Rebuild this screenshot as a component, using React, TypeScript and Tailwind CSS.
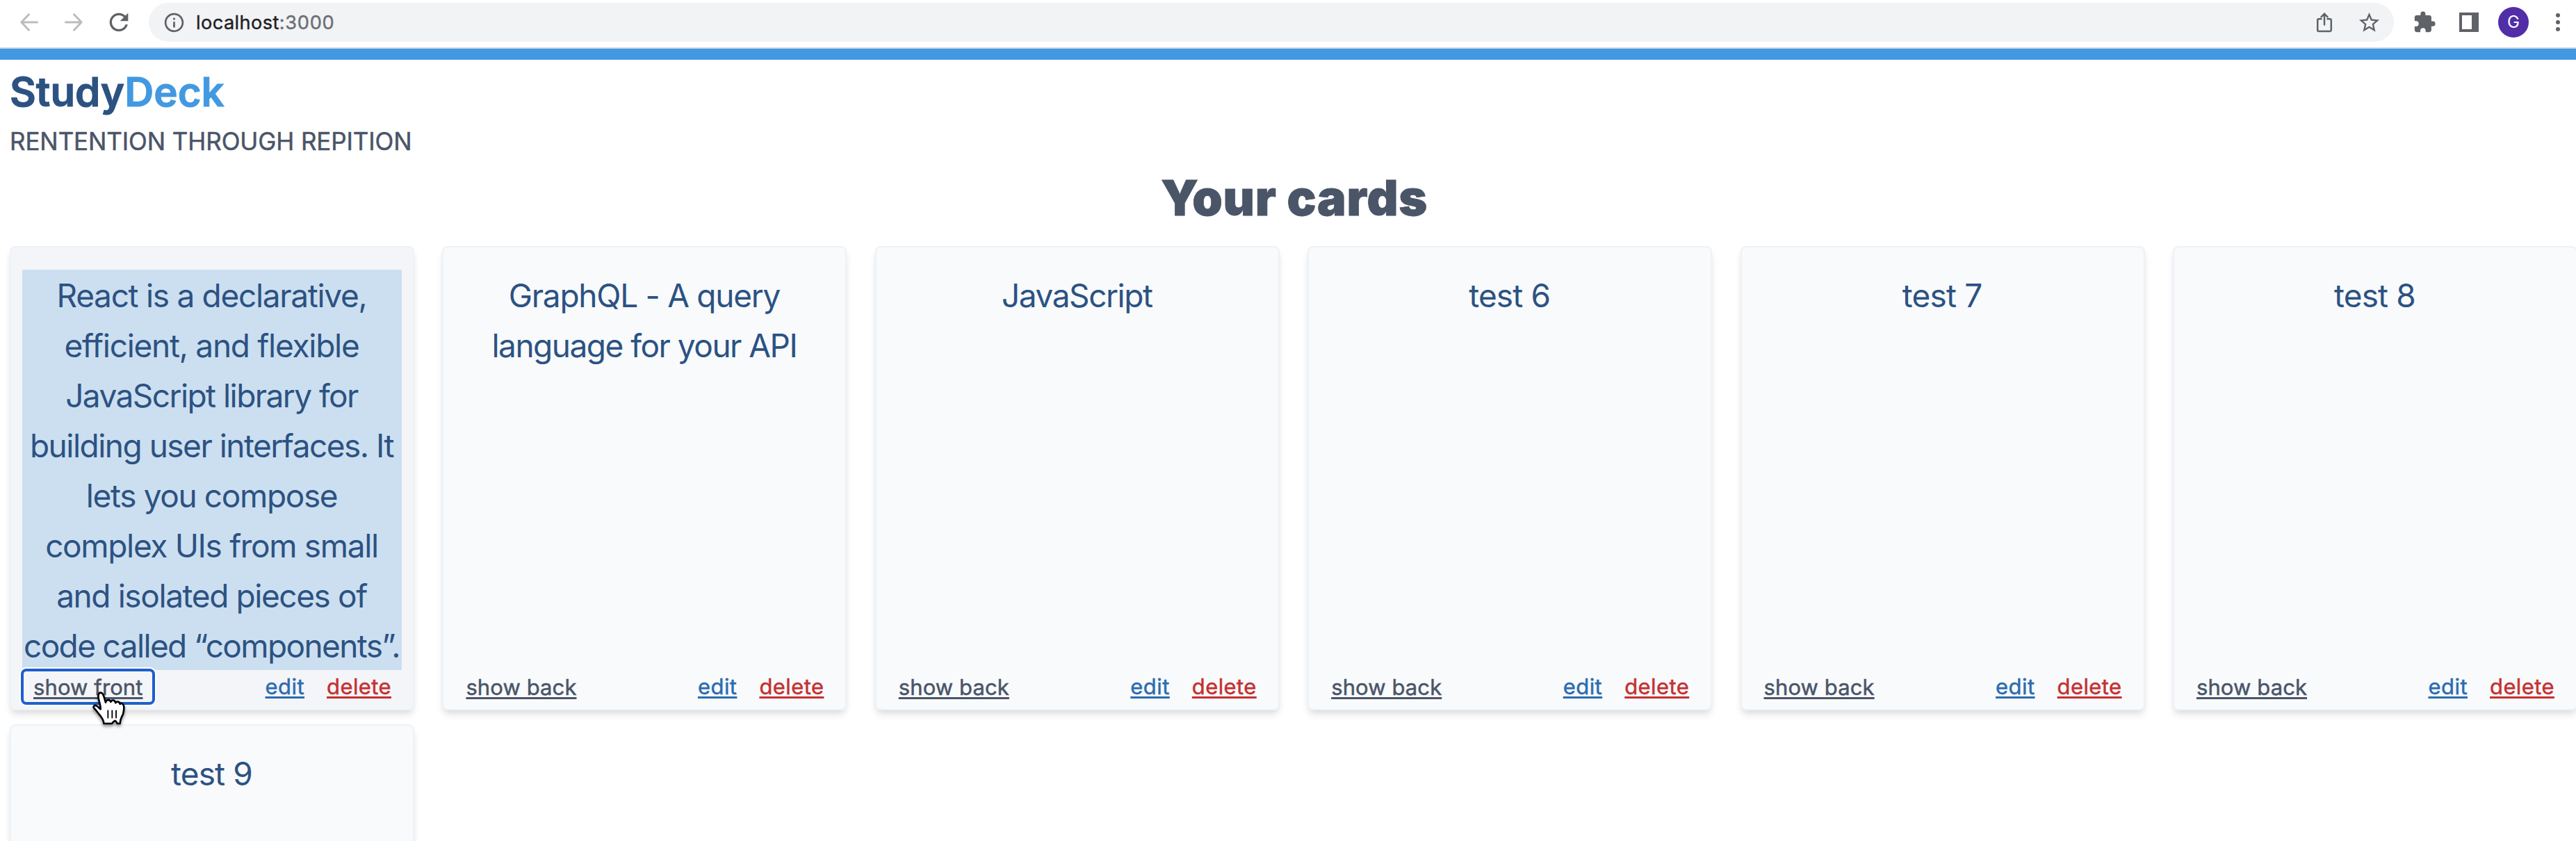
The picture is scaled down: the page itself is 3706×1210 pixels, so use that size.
import { MdExtension, MdInfoOutline, MdRefresh, MdStarBorder } from "react-icons/md";

type Line = { text: string; tracking: string };
type Card = { id: string; lines: Line[]; flipped?: boolean; collapsed?: boolean };

const cards: Card[] = [
  {
    id: "react",
    flipped: true,
    lines: [
      { text: "React is a declarative,", tracking: "tracking-[-1.31px]" },
      { text: "efficient, and flexible", tracking: "tracking-[-1.28px]" },
      { text: "JavaScript library for", tracking: "tracking-[-1.56px]" },
      { text: "building user interfaces. It", tracking: "tracking-[-1.51px]" },
      { text: "lets you compose", tracking: "tracking-[-1.37px]" },
      { text: "complex UIs from small", tracking: "tracking-[-1.34px]" },
      { text: "and isolated pieces of", tracking: "tracking-[-1.41px]" },
      { text: "code called “components”.", tracking: "tracking-[-1.64px]" },
    ],
  },
  {
    id: "graphql",
    lines: [
      { text: "GraphQL - A query", tracking: "tracking-[-1.26px]" },
      { text: "language for your API", tracking: "tracking-[-1.5px]" },
    ],
  },
  { id: "javascript", lines: [{ text: "JavaScript", tracking: "tracking-[-1.43px]" }] },
  { id: "test6", lines: [{ text: "test 6", tracking: "tracking-[-0.88px]" }] },
  { id: "test7", lines: [{ text: "test 7", tracking: "tracking-[-0.88px]" }] },
  { id: "test8", lines: [{ text: "test 8", tracking: "tracking-[-0.88px]" }] },
  { id: "test9", collapsed: true, lines: [{ text: "test 9", tracking: "tracking-[-0.88px]" }] },
];

function Arrow({ flip = false }: { flip?: boolean }) {
  return (
    <svg
      viewBox="0 0 28 28"
      className={flip ? "size-7 shrink-0 rotate-180" : "size-7 shrink-0"}
      fill="none"
      stroke="#babcbe"
      strokeWidth="3"
      strokeLinecap="round"
      strokeLinejoin="round"
    >
      <path d="M13.500 2.800 2.800 14l10.700 11.200M3 14h22.500" />
    </svg>
  );
}

function BrowserBar() {
  return (
    <div className="flex h-[70px] shrink-0 items-start border-b-2 border-[#d9dbde] bg-white">
      <div className="flex h-16 w-full items-center pl-7">
        <Arrow />
        <div className="w-9" />
        <Arrow flip />
        <MdRefresh className="ml-[31px] size-10 shrink-0 text-[#5f6368]" />
        <div className="ml-[23px] flex h-14 w-[3230px] shrink-0 items-center rounded-full bg-[#f2f3f5] pl-5">
          <MdInfoOutline className="size-[33px] shrink-0 text-[#5f6368]" />
          <span className="ml-[15px] pt-0.5 text-[27.2px] leading-none text-[#202124] [-webkit-text-stroke:0.4px]">
            <span className="tracking-[0.4px]">localhost</span>
            <span className="tracking-[0.7px] text-[#6b6f74]">:3000</span>
          </span>
          <div className="grow" />
          <svg
            viewBox="0 0 24 30"
            className="mr-[35px] h-[30px] w-6 shrink-0"
            fill="none"
            stroke="#5f6368"
            strokeWidth="2.500"
            strokeLinecap="round"
          >
            <path d="M7.500 10.200H4A1.800 1.800 0 0 0 2.200 12v14.200A1.800 1.800 0 0 0 4 28h16a1.800 1.800 0 0 0 1.800-1.800V12a1.800 1.800 0 0 0-1.800-1.800h-3.500" />
            <path d="M12 18.500V3M7.500 7.300l4.500-4.500 4.500 4.500" />
          </svg>
          <MdStarBorder className="mr-[18px] size-[35px] shrink-0 text-[#5f6368]" />
        </div>
        <MdExtension className="ml-[27px] size-[34px] shrink-0 text-[#5f6368]" />
        <div className="ml-[33px] flex size-7 shrink-0 items-center bg-[#5f6368] pl-1">
          <div className="h-5 w-3.5 bg-white" />
        </div>
        <div className="ml-7 flex size-11 shrink-0 items-center justify-center rounded-full bg-[#512da8] text-[24px] leading-none text-white">
          G
        </div>
        <div className="ml-[39px] flex shrink-0 flex-col gap-1">
          <div className="size-1.5 rounded-full bg-[#5f6368]" />
          <div className="size-1.5 rounded-full bg-[#5f6368]" />
          <div className="size-1.5 rounded-full bg-[#5f6368]" />
        </div>
      </div>
    </div>
  );
}

function HandPointer() {
  return (
    <svg
      viewBox="66 12 144 156"
      className="absolute top-[28px] left-[98px] z-10 h-[52px] w-12 drop-shadow-[0_3px_2px_rgba(0,0,0,0.4)]"
      strokeLinejoin="round"
      strokeLinecap="round"
    >
      <path
        d="M118 153c0-14-8-25-17-36-9-10-15-21-24-29-7-8 0-16 9-12 6 3 12 11 18 15 1-15-6-31-9-47-2-12-1-23 9-24 9-1 12 9 15 18l7 24c0-13 19-15 22-2 3-11 19-9 21 4 4-9 17-6 19 5 4-6 15-3 17 11 1 13-1 21-4 32-3 10-13 19-13 41h-12c-3-7-6-11-10-12-5 1-9 6-13 12z"
        fill="#fff"
        stroke="#000"
        strokeWidth="8"
      />
      <path d="M136 97v31M154 97v31M171 97v31" fill="none" stroke="#000" strokeWidth="5.500" />
    </svg>
  );
}

const linkText = "underline decoration-[3px] underline-offset-[3px] [-webkit-text-stroke:0.5px]";

function StudyCard({ card }: { card: Card }) {
  return (
    <article
      className={`h-[668px] rounded-lg border-2 border-[#edf2f7] px-4 pt-8 shadow-[0_8px_12px_-2px_rgba(0,0,0,0.1),0_4px_8px_-2px_rgba(0,0,0,0.06)] ${
        card.flipped ? "bg-[#f4f5f9]" : "bg-[#f8fafc]"
      }`}
    >
      <div
        className={`h-[576px] pt-px text-center text-[46px] text-[#2c5282] ${card.flipped ? "bg-[#ccdff0]" : ""}`}
      >
        {card.lines.map((line) => (
          <p key={line.text} className={`h-[72px] pr-px leading-[72px] whitespace-nowrap ${line.tracking}`}>
            {line.text}
          </p>
        ))}
      </div>
      {!card.collapsed && (
        <div className="flex h-12 items-center pr-[15px] pl-0.5 text-[31px] leading-[46px]">
          <button
            className={`relative h-11 rounded px-3.5 text-[#4a5568] ${
              card.flipped ? "shadow-[0_0_0_4px_#1d5fce,0_0_0_6px_#ffffff]" : ""
            }`}
          >
            <span className={`tracking-[0.1px] ${linkText}`}>{card.flipped ? "show front" : "show back"}</span>
            {card.flipped && <HandPointer />}
          </button>
          <button className={`ml-auto tracking-[0.45px] text-[#2b6cb0] ${linkText}`}>edit</button>
          <button className={`ml-8 tracking-[0.4px] text-[#c53030] ${linkText}`}>delete</button>
        </div>
      )}
    </article>
  );
}

export default function App() {
  return (
    <div className="flex h-[1210px] w-[3706px] flex-col overflow-hidden bg-white font-['Inter',sans-serif]">
      <BrowserBar />
      <div className="h-4 shrink-0 bg-[#4299e1]" />
      <main className="pl-3.5">
        <header className="pt-4">
          <div className="text-[58.2px] leading-[60px] font-semibold text-[#2c5282] [-webkit-text-stroke:1px]">
            Study<span className="text-[#4299e1]">Deck</span>
          </div>
          <p className="mt-3.5 text-[35px] leading-[54px] tracking-[-0.1px] text-[#4a5568] [-webkit-text-stroke:0.5px]">
            RENTENTION THROUGH REPITION
          </p>
        </header>
        <h1 className="mt-[19px] pl-1 text-center text-[69.8px] leading-[72px] font-black tracking-[0.8px] text-[#4a5568] [-webkit-text-stroke:0.8px]">
          Your cards
        </h1>
        <div className="mt-[33px] grid grid-cols-[repeat(6,582px)] gap-x-[40.4px] gap-y-5">
          {cards.map((card) => (
            <StudyCard key={card.id} card={card} />
          ))}
        </div>
      </main>
    </div>
  );
}
